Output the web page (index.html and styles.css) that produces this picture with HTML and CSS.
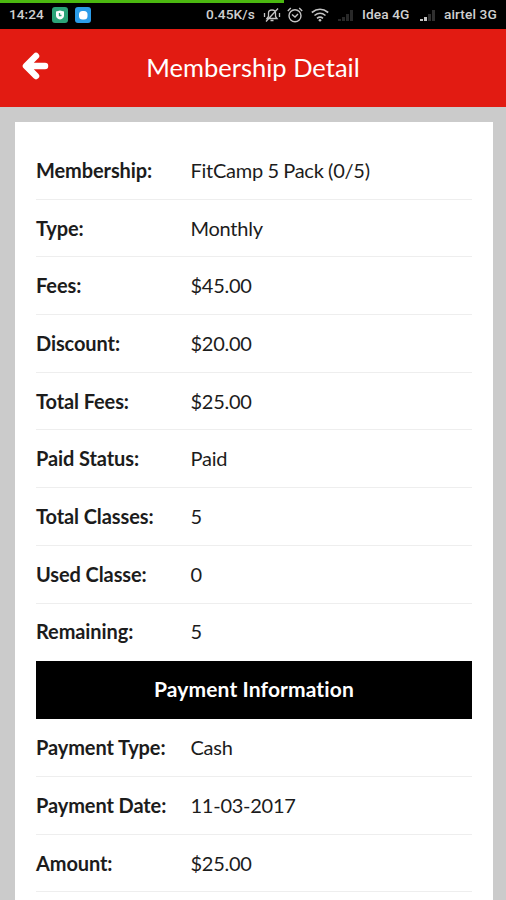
FILE: index.html
```html
<!DOCTYPE html>
<html lang="en"><head><meta charset="utf-8"><title>Membership Detail</title><link rel="stylesheet" href="styles.css"></head>
<body>
<div class="status">
<span class="time">14:24</span>
<svg class="app" viewBox="0 0 16 16"><rect width="16" height="16" rx="3" fill="#2ba478"/><path d="M8 3.500l4 1v4Q12 11.500 8 12.500Q4 11.500 4 8.500v-4z" fill="#fff"/><path d="M7.500 6v2.500h2" fill="none" stroke="#2ba478" stroke-width="1.300"/></svg>
<svg class="app app2" viewBox="0 0 16 16"><rect width="16" height="16" rx="3" fill="#2b9be8"/><rect x="4" y="4" width="8.500" height="8.500" rx="3.500" fill="#fff"/></svg>
<span class="speed">0.45K/s</span>
<svg class="mute" viewBox="0 0 18 16" fill="none" stroke="#c4c4c4" stroke-width="1.300"><path d="M4 11.500l1.500-2V6q0-3 3.500-3t3.500 3v3.500l1.500 2zM7.500 13.500h3M3 14.500L15 1.500M1.500 6v4M16.500 6v4"/></svg>
<svg class="alarm" viewBox="0 0 16 16" fill="none" stroke="#c4c4c4" stroke-width="1.400"><circle cx="8" cy="8.700" r="6"/><path d="M5 7.500l3 2.500 3-3M.8 4l3-3M15.200 4l-3-3"/></svg>
<svg class="wifi" viewBox="0 0 18 14" fill="none" stroke="#c4c4c4" stroke-width="1.600"><path d="M.8 4.500q8.200-6.500 16.400 0M3.500 7.500q5.500-4.500 11 0M6 10.300q3-2.500 6 0"/><circle cx="9" cy="12.300" r="1.300" fill="#c4c4c4" stroke="none"/></svg>
<svg class="sig" viewBox="0 0 18 12"><path d="M1 10h3v2H1zM5 8h3v4H5zM9 5h3v7H9zM13 1h3v11h-3z" fill="#292929"/></svg>
<span class="carrier">Idea 4G</span>
<svg class="sig sig2" viewBox="0 0 18 12"><path d="M1 10h3v2H1zM5 8h3v4H5z" fill="#c4c4c4"/><path d="M9 5h3v7H9zM13 1h3v11h-3z" fill="#303030"/></svg>
<span class="carrier">airtel 3G</span>
<i class="progress"></i>
</div>
<header><svg class="back" viewBox="0 0 28 28"><path d="M15 4L5 14l10 10M6 14h18" fill="none" stroke="#fff" stroke-width="6.500" stroke-linecap="round" stroke-linejoin="round"/></svg><h1>Membership Detail</h1></header>
<main><dl>
<div><dt>Membership:</dt><dd>FitCamp 5 Pack (0/5)</dd></div>
<div><dt>Type:</dt><dd>Monthly</dd></div>
<div><dt>Fees:</dt><dd>$45.00</dd></div>
<div><dt>Discount:</dt><dd>$20.00</dd></div>
<div><dt>Total Fees:</dt><dd>$25.00</dd></div>
<div><dt>Paid Status:</dt><dd>Paid</dd></div>
<div><dt>Total Classes:</dt><dd>5</dd></div>
<div><dt>Used Classe:</dt><dd>0</dd></div>
<div><dt>Remaining:</dt><dd>5</dd></div>
</dl><h2>Payment Information</h2><dl>
<div><dt>Payment Type:</dt><dd>Cash</dd></div>
<div><dt>Payment Date:</dt><dd>11-03-2017</dd></div>
<div><dt>Amount:</dt><dd>$25.00</dd></div>
</dl></main>
</body></html>
```
FILE: styles.css
```css
*{box-sizing:border-box}
body{margin:0;background:#cbcbcb;font-family:Lato,sans-serif;color:#1c1c1c;font-variant-ligatures:none}
.status{position:relative;height:29px;background:#000;color:#d0d0d0;display:flex;align-items:center;font:500 13.700px/29px Roboto,sans-serif;white-space:nowrap}
.status svg,.status span{flex:none}
.time{width:43px;margin-left:9px}
.app{width:16px;height:16px}
.app2{margin-left:7px}
.speed{margin-left:115px;width:57px;letter-spacing:.1px}
.mute{width:18px;height:16px}
.alarm{width:16px;height:16px;margin-left:6px}
.wifi{width:18px;height:14px;margin-left:8px}
.sig{width:18px;height:12px;margin:0 7px 0 8px}
.carrier{width:49px;letter-spacing:.1px}
.sig2{margin:0 7px 0 8px}
.progress{position:absolute;left:0;top:0;width:284px;height:3px;background:#4bb810}
header{position:relative;height:78px;background:#e21b12;color:#fff;display:flex;align-items:center;justify-content:center}
.back{position:absolute;left:21px;top:23px;width:28px;height:28px}
h1{margin:-3px 0 0;font-size:25.5px;font-weight:400}
main{height:778px;margin:15px 13px 0 15px;padding:20px 21px 0;background:#fff}
dl{margin:0}
dl div{display:flex;height:57.700px;padding-bottom:.6px;align-items:center;border-bottom:1px solid #eee;font-size:20px}
dl:first-child div:last-child{border-bottom:0;padding-bottom:2px}
dt{width:154.500px;font-weight:700;letter-spacing:-.1px}
dd{margin:0;letter-spacing:-.25px;word-spacing:-.4px}
h2{margin:0;height:58px;background:#000;color:#fff;text-align:center;font-size:21px;line-height:56px;letter-spacing:.12px}
```
